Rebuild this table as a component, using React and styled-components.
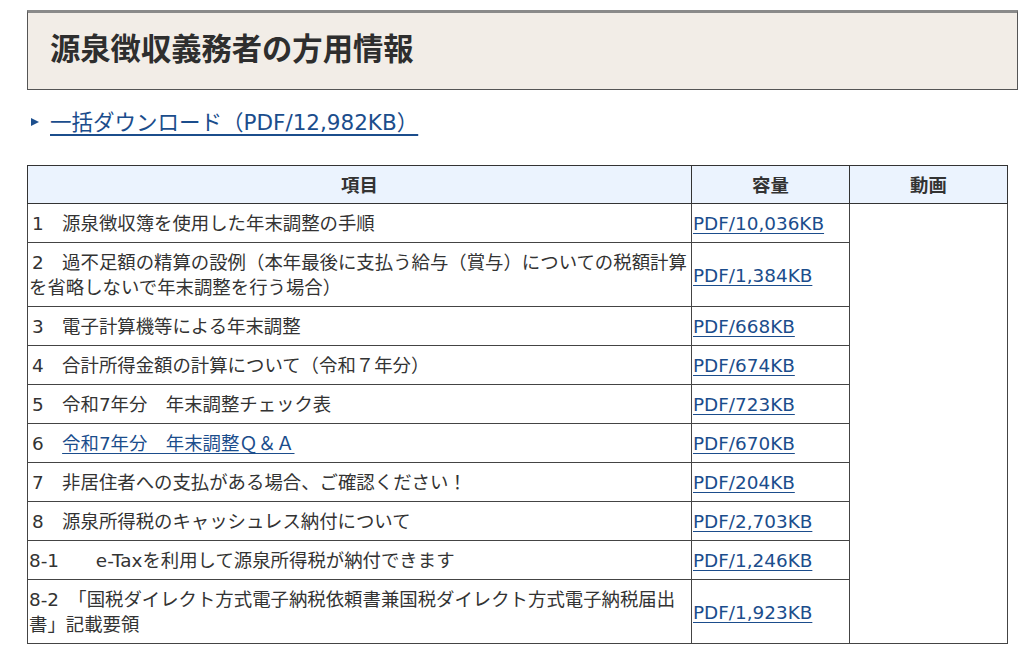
import React from "react";
import styled, { createGlobalStyle } from "styled-components";

const Global = createGlobalStyle`
  html, body { margin: 0; padding: 0; background: #fff; }
  body {
    font-family: "DejaVu Sans", "Noto Sans CJK JP", sans-serif;
    color: #333;
  }
`;

const Page = styled.div`
  padding: 10px 0 0 27px;
  width: 991px;
`;

const TitleBox = styled.div`
  background: #f2ede7;
  border: 1px solid #555;
  border-top: 3px solid #8a8a8a;
  padding: 19px 22px 21px;
`;

const Title = styled.h2`
  margin: 0;
  font-size: 30.3px;
  line-height: 36px;
  font-weight: bold;
  color: #2e2e2e;
`;

const DownloadRow = styled.div`
  display: flex;
  align-items: center;
  gap: 11px;
  margin: 18px 0 27px 4px;
  height: 30px;
`;

const Bullet = styled.span`
  width: 0;
  height: 0;
  border-left: 8px solid #1d4f8e;
  border-top: 4px solid transparent;
  border-bottom: 4px solid transparent;
  margin-top: -2px;
`;

const Link = styled.a`
  color: #1b4d8c;
  text-decoration: underline;
  text-underline-offset: ${(p) => (p.$big ? "4px" : "3px")};
  font-size: ${(p) => (p.$big ? "21.5px" : "inherit")};
  line-height: ${(p) => (p.$big ? "30px" : "inherit")};
  cursor: pointer;
`;

const Table = styled.table`
  width: 980px;
  border-collapse: collapse;
  table-layout: fixed;
  font-size: 18.4px;
  line-height: 25px;
  border: 1px solid #333;
`;

const Th = styled.th`
  background: #ebf3fe;
  font-weight: bold;
  text-align: center;
  padding: 7px 2px 5px;
  border: 1px solid #333;
  color: #333;
`;

const Td = styled.td`
  padding: 7px 1px 6px 1px;
  border: 1px solid #444;
  vertical-align: middle;
  color: #333;
  text-align: left;
`;

const Num = styled.span`
  padding-left: ${(p) => p.$indent}px;
`;

const rows = [
  { n: "1", indent: 3, text: "　源泉徴収簿を使用した年末調整の手順", size: "PDF/10,036KB" },
  {
    n: "2",
    indent: 3,
    text: "　過不足額の精算の設例（本年最後に支払う給与（賞与）についての税額計算を省略しないで年末調整を行う場合）",
    size: "PDF/1,384KB",
  },
  { n: "3", indent: 3, text: "　電子計算機等による年末調整", size: "PDF/668KB" },
  { n: "4", indent: 3, text: "　合計所得金額の計算について（令和７年分）", size: "PDF/674KB" },
  { n: "5", indent: 3, text: "　令和7年分　年末調整チェック表", size: "PDF/723KB" },
  { n: "6", indent: 3, text: "　", linkText: "令和7年分　年末調整Ｑ＆Ａ", size: "PDF/670KB" },
  { n: "7", indent: 3, text: "　非居住者への支払がある場合、ご確認ください！", size: "PDF/204KB" },
  { n: "8", indent: 3, text: "　源泉所得税のキャッシュレス納付について", size: "PDF/2,703KB" },
  { n: "8-1", indent: 0, text: "　　e-Taxを利用して源泉所得税が納付できます", size: "PDF/1,246KB" },
  {
    n: "8-2",
    indent: 0,
    text: "　「国税ダイレクト方式電子納税依頼書兼国税ダイレクト方式電子納税届出書」記載要領",
    size: "PDF/1,923KB",
  },
];

export default function App() {
  return (
    <>
      <Global />
      <Page>
        <TitleBox>
          <Title>源泉徴収義務者の方用情報</Title>
        </TitleBox>
        <DownloadRow>
          <Bullet />
          <Link $big>一括ダウンロード（PDF/12,982KB）</Link>
        </DownloadRow>
        <Table>
          <colgroup>
            <col style={{ width: 664 }} />
            <col style={{ width: 158 }} />
            <col style={{ width: 158 }} />
          </colgroup>
          <thead>
            <tr>
              <Th>項目</Th>
              <Th>容量</Th>
              <Th>動画</Th>
            </tr>
          </thead>
          <tbody>
            {rows.map((r, i) => (
              <tr key={r.n}>
                <Td>
                  <Num $indent={r.indent}>{r.n}</Num>
                  {r.text}
                  {r.linkText && <Link>{r.linkText}</Link>}
                </Td>
                <Td>
                  <Link>{r.size}</Link>
                </Td>
                {i === 0 && <Td rowSpan={rows.length} />}
              </tr>
            ))}
          </tbody>
        </Table>
      </Page>
    </>
  );
}
